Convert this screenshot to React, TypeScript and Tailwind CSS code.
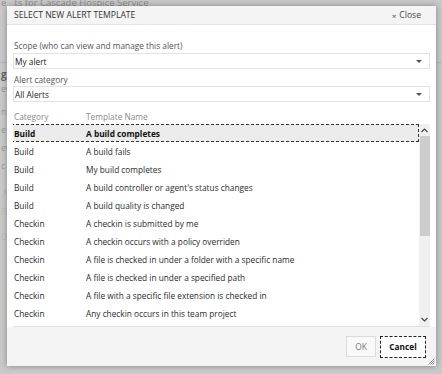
import React from "react";

interface Template {
  category: string;
  name: string;
}

const templates: Template[] = [
  { category: "Build", name: "A build completes" },
  { category: "Build", name: "A build fails" },
  { category: "Build", name: "My build completes" },
  { category: "Build", name: "A build controller or agent's status changes" },
  { category: "Build", name: "A build quality is changed" },
  { category: "Checkin", name: "A checkin is submitted by me" },
  { category: "Checkin", name: "A checkin occurs with a policy overriden" },
  { category: "Checkin", name: "A file is checked in under a folder with a specific name" },
  { category: "Checkin", name: "A file is checked in under a specified path" },
  { category: "Checkin", name: "A file with a specific file extension is checked in" },
  { category: "Checkin", name: "Any checkin occurs in this team project" },
  { category: "Code review", name: "A code review is requested by me" },
];

const Select: React.FC<{ value: string }> = ({ value }) => (
  <div className="flex h-[16px] items-center justify-between border border-[#e3e3e3] bg-white pl-[1px] pr-[7px] text-[#222]">
    <span>{value}</span>
    <svg width="6" height="3" viewBox="0 0 6 3">
      <path d="M0 0h6L3 3z" fill="#555" />
    </svg>
  </div>
);

const App: React.FC = () => {
  return (
    <div
      className="relative h-[374px] w-[442px] overflow-hidden bg-[#c9c9c9] text-[8.3px] leading-[13px]"
      style={{ fontFamily: '"Open Sans", "Noto Sans", sans-serif' }}
    >
      {/* page behind the overlay */}
      <div className="flex flex-col text-[#9a9a9a]">
        <div className="-mt-[4px] flex h-[12px] items-center gap-[8px] text-[9.5px] text-[#8e8e8e]">
          <span className="pl-[1px]">e</span>
          <span>ts for Cascade Hospice Service</span>
        </div>
        <div className="mt-[54px] h-px w-full bg-[#b5b5b5]" />
        <div className="mt-[5px] pl-[1px] text-[10px] font-bold text-[#666]">g</div>
        <div className="mt-[1px] pl-[1px]">ev</div>
        <div className="mt-[10px] pl-[1px]">n:</div>
        <div className="mt-[5px] pl-[1px]">e</div>
        <div className="mt-[5px] pl-[1px]">ev</div>
        <div className="mt-[5px] pl-[1px]">c i</div>
        <div className="mt-[14px] pl-[3px] text-[#bbb]">A</div>
        <div className="mt-[6px] pl-[1px] text-[#bbb]">FI</div>
        <div className="mt-[12px] pl-[1px] text-[#bbb]">O</div>
      </div>

      {/* dialog */}
      <div className="absolute left-[7px] top-[6px] flex h-[360px] w-[429px] flex-col bg-white shadow-[0_0_6px_rgba(0,0,0,0.35)]">
        <div className="flex h-[19px] items-center justify-between border-b border-[#e4e4e4] bg-[#f4f4f4] pl-[7px] pr-[15px] text-[8.6px] text-[#333]">
          <span>SELECT NEW ALERT TEMPLATE</span>
          <span className="flex items-center gap-[3px] text-[#444]">
            <span className="text-[8px]">×</span>
            <span>Close</span>
          </span>
        </div>

        <div className="flex flex-col px-[6px] pt-[14px]">
          <div className="pl-[1px] text-[#555]">Scope (who can view and manage this alert)</div>
          <div className="mt-[1px]">
            <Select value="My alert" />
          </div>
          <div className="mt-[4px] pl-[1px] text-[#555]">Alert category</div>
          <div>
            <Select value="All Alerts" />
          </div>

          <div className="mt-[7px] flex h-[15px] items-center pl-[1px] text-[#8a8a8a]">
            <span className="w-[72px]">Category</span>
            <span>Template Name</span>
          </div>

          <div className="flex h-[203px] border-b border-[#e0e0e0]">
            <div className="flex-1 overflow-hidden">
              {templates.map((t, i) => (
                <div
                  key={i}
                  className={
                    i === 0
                      ? "-ml-[2px] flex h-[18px] items-center border border-dashed border-[#333] bg-[#ebebeb] pl-[2px] font-bold text-[#111]"
                      : "flex h-[18px] items-center pl-[1px] text-[#2a2a2a]"
                  }
                >
                  <span className="w-[72px]">{t.category}</span>
                  <span>{t.name}</span>
                </div>
              ))}
            </div>
            <div className="flex w-[11px] flex-col items-center bg-[#f0f0f0]">
              <svg className="mt-[4px]" width="7" height="5" viewBox="0 0 7 5">
                <path d="M0.5 4L3.5 1L6.5 4" fill="none" stroke="#444" strokeWidth="1.1" />
              </svg>
              <div className="mt-[3px] h-[100px] w-[10px] bg-[#cdcdcd]" />
              <div className="flex-1" />
              <svg className="mb-[4px]" width="7" height="5" viewBox="0 0 7 5">
                <path d="M0.5 1L3.5 4L6.5 1" fill="none" stroke="#444" strokeWidth="1.1" />
              </svg>
            </div>
          </div>
        </div>

        <div className="relative flex flex-1 items-center justify-end gap-[4px] bg-[#f4f4f4] pr-[10px]">
          <button className="h-[21px] w-[30px] border border-[#dcdcdc] bg-[#f9f9f9] text-[#777]">OK</button>
          <button className="h-[22px] w-[46px] border border-dashed border-[#222] bg-white font-bold text-[#111]">
            Cancel
          </button>
          <svg className="absolute bottom-[1px] right-[1px]" width="7" height="7" viewBox="0 0 7 7">
            <path d="M6.5 0.5L0.5 6.5M6.5 2.5L2.5 6.5M6.5 4.5L4.5 6.5" stroke="#777" strokeWidth="0.8" />
          </svg>
        </div>
      </div>
    </div>
  );
};

export default App;
